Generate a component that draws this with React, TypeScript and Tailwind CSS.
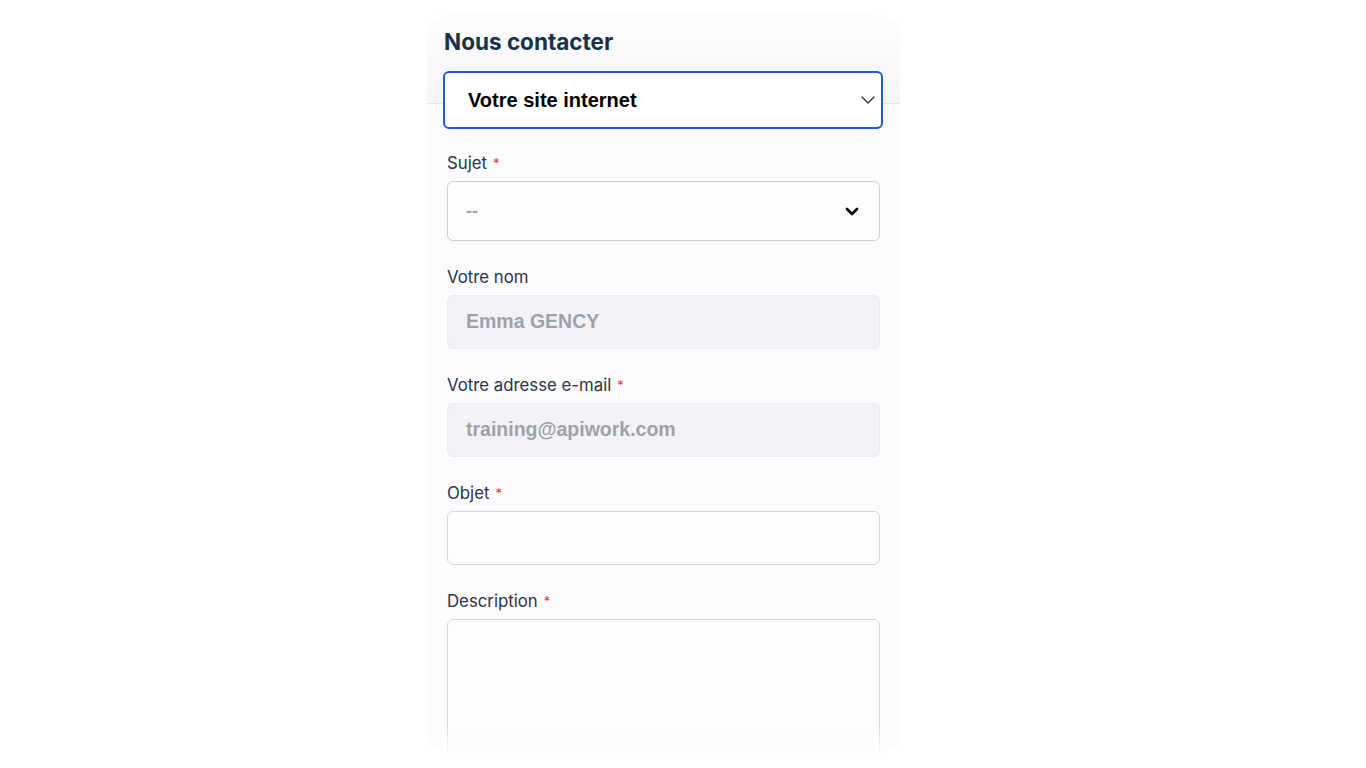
import React from "react";

const labelFont = { fontFamily: "Inter, 'Noto Sans', sans-serif" };
const valueFont = { fontFamily: "'Liberation Sans', Arial, sans-serif" };

function Label({ text, required }: { text: string; required?: boolean }) {
  return (
    <div className="h-6 text-[16.8px] leading-6 text-[#2b3544]" style={labelFont}>
      {text}
      {required && <span className="ml-1.5 text-[13px] align-top text-[#e0393e]">*</span>}
    </div>
  );
}

function Chevron({ thin }: { thin?: boolean }) {
  return thin ? (
    <svg width="14" height="8" viewBox="0 0 14 8" fill="none">
      <path d="M1 1l6 6 6-6" stroke="#333" strokeWidth="1.4" strokeLinecap="round" strokeLinejoin="round" />
    </svg>
  ) : (
    <svg width="14" height="9" viewBox="0 0 14 9" fill="none">
      <path d="M2 2l5 5 5-5" stroke="#111" strokeWidth="2.8" strokeLinecap="round" strokeLinejoin="round" />
    </svg>
  );
}

export default function App() {
  return (
    <div className="min-h-[768px] bg-white pl-[427px] pt-[15px]">
      <div className="relative w-[473px] h-[737px] overflow-hidden rounded-3xl bg-[#fcfbfd] shadow-[0_0_6px_rgba(0,0,0,0.02)]">
        {/* header */}
        <div className="h-[89px] border-b border-[#e4e4e8] bg-gradient-to-b from-[#fdfcfe] to-[#f5f4f7] pt-[13px] pl-[17px]">
          <h2 className="text-[22.5px] leading-7 font-bold text-[#16324a]" style={labelFont}>
            Nous contacter
          </h2>
          <div className="mt-[15px] ml-[-1px] flex h-[58px] w-[440px] items-center justify-between rounded-md border-2 border-[#1d5ad8] bg-white pl-[23px] pr-[6px]">
            <span className="text-[20px] font-bold text-black" style={valueFont}>
              Votre site internet
            </span>
            <Chevron thin />
          </div>
        </div>

        {/* form */}
        <div className="flex flex-col gap-6 px-5 pt-[47px]">
          <div>
            <Label text="Sujet" required />
            <div className="mt-1.5 flex h-[60px] items-center justify-between rounded-md border border-[#cfced4] bg-[#fdfcfe] pl-[18px] pr-[20px]">
              <span className="text-[18px] font-bold text-[#a3a6ad]" style={valueFont}>
                --
              </span>
              <Chevron />
            </div>
          </div>

          <div>
            <Label text="Votre nom" />
            <div className="mt-1.5 flex h-[54px] items-center rounded-md border border-[#ececf0] bg-[#f3f3f7] pl-[18px]">
              <span className="text-[19.5px] font-bold text-[#9da2ab]" style={valueFont}>
                Emma GENCY
              </span>
            </div>
          </div>

          <div>
            <Label text="Votre adresse e-mail" required />
            <div className="mt-1.5 flex h-[54px] items-center rounded-md border border-[#ececf0] bg-[#f3f3f7] pl-[18px]">
              <span className="text-[19.5px] font-bold text-[#9da2ab]" style={valueFont}>
                training@apiwork.com
              </span>
            </div>
          </div>

          <div>
            <Label text="Objet" required />
            <div className="mt-1.5 h-[54px] rounded-md border-[1.5px] border-[#d6d5da] bg-[#fdfdfe]" />
          </div>

          <div>
            <Label text="Description" required />
            <div className="mt-1.5 h-[160px] rounded-md border-[1.5px] border-[#d6d5da] bg-[#fdfdfe]" />
          </div>
        </div>

        {/* bottom fade */}
        <div className="pointer-events-none absolute bottom-0 left-0 right-0 h-6 bg-gradient-to-b from-transparent to-[#fcfbfd]" />
      </div>
    </div>
  );
}
